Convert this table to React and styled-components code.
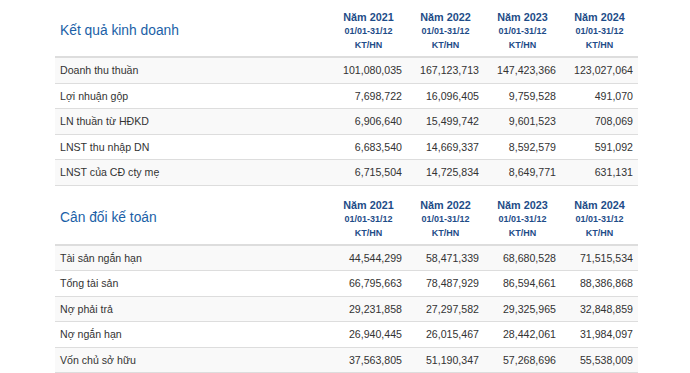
import React from 'react';
import styled, { createGlobalStyle } from 'styled-components';

const GlobalStyle = createGlobalStyle`
	body {
		margin: 0;
		background: #ffffff;
		font-family: 'Liberation Sans', Arial, sans-serif;
	}
`;

const years = ['2021', '2022', '2023', '2024'];

const sections = [
	{
		title: 'Kết quả kinh doanh',
		rows: [
			['Doanh thu thuần', '101,080,035', '167,123,713', '147,423,366', '123,027,064'],
			['Lợi nhuận gộp', '7,698,722', '16,096,405', '9,759,528', '491,070'],
			['LN thuần từ HĐKD', '6,906,640', '15,499,742', '9,601,523', '708,069'],
			['LNST thu nhập DN', '6,683,540', '14,669,337', '8,592,579', '591,092'],
			['LNST của CĐ cty mẹ', '6,715,504', '14,725,834', '8,649,771', '631,131'],
		],
	},
	{
		title: 'Cân đối kế toán',
		rows: [
			['Tài sản ngắn hạn', '44,544,299', '58,471,339', '68,680,528', '71,515,534'],
			['Tổng tài sản', '66,795,663', '78,487,929', '86,594,661', '88,386,868'],
			['Nợ phải trả', '29,231,858', '27,297,582', '29,325,965', '32,848,859'],
			['Nợ ngắn hạn', '26,940,445', '26,015,467', '28,442,061', '31,984,097'],
			['Vốn chủ sở hữu', '37,563,805', '51,190,347', '57,268,696', '55,538,009'],
		],
	},
];

export default function App() {
	return (
		<>
			<GlobalStyle />
			<Page>
				{sections.map((section) => (
					<Table key={section.title}>
						<colgroup>
							<col style={{ width: 275 }} />
							{years.map((y) => (
								<col key={y} style={{ width: 77 }} />
							))}
						</colgroup>
						<thead>
							<tr>
								<TitleCell>{section.title}</TitleCell>
								{years.map((y) => (
									<YearCell key={y}>
										<YearLine>Năm {y}</YearLine>
										<SubLine>01/01-31/12</SubLine>
										<SubLine $last>KT/HN</SubLine>
									</YearCell>
								))}
							</tr>
						</thead>
						<tbody>
							{section.rows.map((row) => (
								<Row key={row[0]}>
									<LabelCell>{row[0]}</LabelCell>
									{row.slice(1).map((v, i) => (
										<ValueCell key={i}>{v}</ValueCell>
									))}
								</Row>
							))}
						</tbody>
					</Table>
				))}
			</Page>
		</>
	);
}

const Page = styled.div`
	display: flex;
	flex-direction: column;
	gap: 2px;
	padding-left: 55px;
`;

const Table = styled.table`
	width: 583px;
	table-layout: fixed;
	border-collapse: collapse;
	border-spacing: 0;
	color: #333333;
`;

const TitleCell = styled.th`
	text-align: left;
	vertical-align: middle;
	padding: 4px 5px 0;
	font-size: 13.8px;
	font-weight: normal;
	color: #1b5fa7;
	border-bottom: 2px solid #dddddd;
`;

const YearCell = styled.th`
	text-align: center;
	padding: 10px 0 4px;
	color: #1e4c88;
	font-weight: bold;
	border-bottom: 2px solid #dddddd;
`;

const YearLine = styled.div`
	font-size: 10.8px;
	line-height: 14px;
`;

const SubLine = styled.div`
	font-size: 9px;
	line-height: ${(p) => (p.$last ? '13px' : '15px')};
`;

const Row = styled.tr`
	&:nth-child(odd) {
		background: #f9f9f9;
	}
`;

const LabelCell = styled.td`
	height: 24.5px;
	padding: 0 5px;
	font-size: 10.6px;
	color: #333333;
	border-bottom: 1px solid #dddddd;
	white-space: nowrap;
`;

const ValueCell = styled(LabelCell)`
	text-align: right;
`;
